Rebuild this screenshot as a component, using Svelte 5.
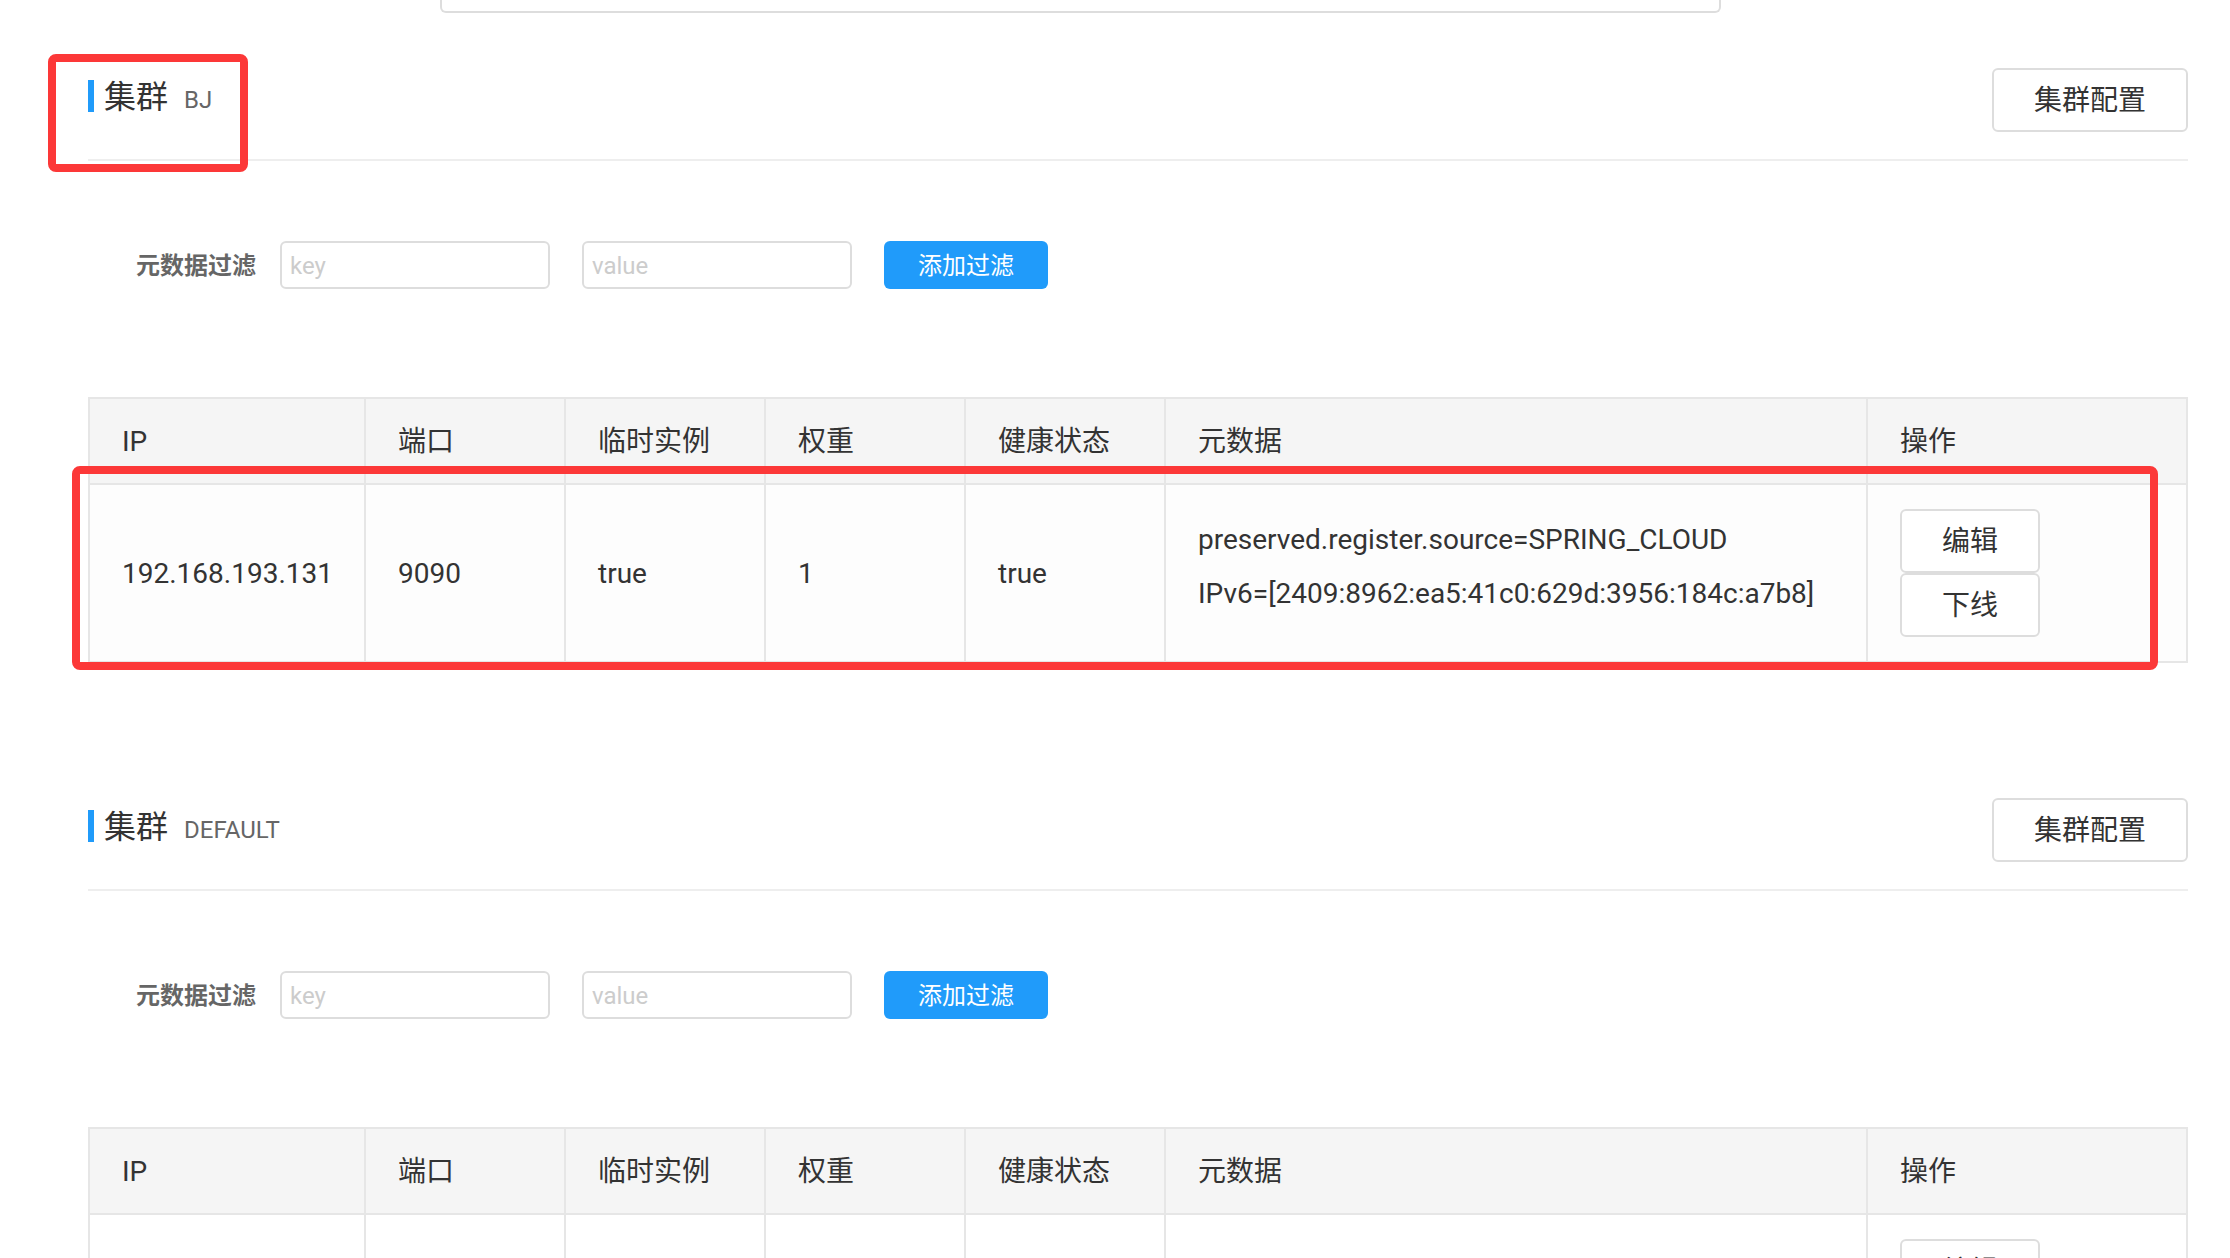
<script>
  const columns = [
    { title: 'IP', cls: 'ip' },
    { title: '端口', cls: 'short' },
    { title: '临时实例', cls: 'short' },
    { title: '权重', cls: 'short' },
    { title: '健康状态', cls: 'short' },
    { title: '元数据', cls: 'metadata' },
    { title: '操作', cls: 'operation' },
  ]

  let clusters = [
    {
      name: 'BJ',
      marked: true,
      instances: [
        {
          ip: '192.168.193.131',
          port: 9090,
          ephemeral: true,
          weight: 1,
          healthy: true,
          metadata: {
            'preserved.register.source': 'SPRING_CLOUD',
            IPv6: '[2409:8962:ea5:41c0:629d:3956:184c:a7b8]',
          },
        },
      ],
    },
    {
      name: 'DEFAULT',
      marked: false,
      instances: [
        { ip: '', port: '', ephemeral: '', weight: '', healthy: '', metadata: {} },
      ],
    },
  ]
</script>

<main class="page">
  <div class="service-form">
    <input class="service-field" type="text" aria-label="服务元数据" readonly />
  </div>

  {#each clusters as cluster}
    <section class="cluster">
      <header class="cluster-head">
        <h2>集群<span>{cluster.name}</span></h2>
        <button class="btn wide" type="button">集群配置</button>
        {#if cluster.marked}
          <div class="mark mark-title"></div>
        {/if}
      </header>

      <form class="filter" on:submit|preventDefault>
        <label for="key-{cluster.name}">元数据过滤</label>
        <input id="key-{cluster.name}" type="text" placeholder="key" />
        <input type="text" placeholder="value" aria-label="value" />
        <button class="btn-primary" type="submit">添加过滤</button>
      </form>

      <div class="table-wrap">
        <table>
          <thead>
            <tr>
              {#each columns as column}
                <th class={column.cls}>{column.title}</th>
              {/each}
            </tr>
          </thead>
          <tbody>
            {#each cluster.instances as instance}
              <tr class:active={cluster.marked}>
                <td>{instance.ip}</td>
                <td>{instance.port}</td>
                <td>{instance.ephemeral}</td>
                <td>{instance.weight}</td>
                <td>{instance.healthy}</td>
                <td>
                  {#each Object.entries(instance.metadata) as [key, value]}
                    <p>{key}={value}</p>
                  {/each}
                </td>
                <td class="operation">
                  <div class="actions">
                    <button class="btn" type="button">编辑</button>
                    <button class="btn" type="button">下线</button>
                  </div>
                </td>
              </tr>
            {/each}
          </tbody>
        </table>
        {#if cluster.marked}
          <div class="mark mark-row"></div>
        {/if}
      </div>
    </section>
  {/each}
</main>

<style>
  :global(body) {
    background: #fff;
  }

  .page {
    box-sizing: border-box;
    height: 100vh;
    overflow: hidden;
    padding: 0 42px 0 88px;
    color: #333;
    font-family: Roboto, 'Noto Sans CJK SC', sans-serif;
    font-size: 28px;
    line-height: 40px;
  }

  input,
  button {
    box-sizing: border-box;
    margin: 0;
    font-family: inherit;
  }

  .service-form {
    display: grid;
    grid-template-columns: 352px 1281fr 467fr;
    margin-bottom: 55px;
  }

  .service-field {
    grid-column: 2;
    width: 100%;
    height: 13px;
    padding: 0;
    border: 2px solid #ddd;
    border-top: 0;
    border-radius: 0 0 6px 6px;
  }

  .cluster {
    margin-bottom: 135px;
  }

  .cluster-head {
    position: relative;
    display: flex;
    align-items: flex-start;
    justify-content: space-between;
    padding-bottom: 27px;
    border-bottom: 2px solid #eee;
  }

  h2 {
    box-sizing: border-box;
    display: flex;
    align-items: baseline;
    gap: 16px;
    height: 32px;
    margin: 12px 0;
    padding: 1px 0 0 10px;
    border-left: 6px solid #209bfa;
    font-size: 32px;
    font-weight: 400;
    line-height: 32px;
  }

  h2 span {
    color: #666;
    font-size: 24px;
  }

  .btn {
    width: 140px;
    height: 64px;
    padding: 2px 0 0;
    border: 2px solid #ddd;
    border-radius: 6px;
    background: #fff;
    color: #333;
    font-size: 28px;
    line-height: 40px;
    cursor: pointer;
  }

  .btn.wide {
    width: 196px;
  }

  .filter {
    display: flex;
    align-items: center;
    margin: 80px 0 108px;
    padding-left: 48px;
    font-size: 24px;
  }

  .filter label {
    margin-right: 24px;
    padding-top: 2px;
    color: #666;
    font-weight: 700;
  }

  .filter input {
    width: 270px;
    height: 48px;
    margin-right: 32px;
    padding: 2px 8px 0;
    border: 2px solid #ddd;
    border-radius: 6px;
    background: #fff;
    color: #333;
    font-size: 24px;
  }

  .filter input::placeholder {
    color: #ccc;
  }

  .btn-primary {
    width: 164px;
    height: 48px;
    padding: 2px 0 0;
    border: 0;
    border-radius: 6px;
    background: #209bfa;
    color: #fff;
    font-size: 24px;
    line-height: 40px;
    cursor: pointer;
  }

  .table-wrap {
    position: relative;
  }

  table {
    box-sizing: border-box;
    width: 100%;
    border: 2px solid #e6e6e6;
    border-width: 2px 0 0 2px;
    border-spacing: 0;
    table-layout: fixed;
  }

  th,
  td {
    box-sizing: border-box;
    padding: 2px 32px 0;
    border: 2px solid #e6e6e6;
    border-width: 0 2px 2px 0;
    font-weight: 400;
    text-align: left;
  }

  th {
    height: 86px;
    background: #f5f5f5;
  }

  td.operation {
    padding: 24px 32px;
  }

  .ip {
    width: 276px;
  }

  .short {
    width: 200px;
  }

  .operation {
    width: 320px;
  }

  tr.active td {
    background: #fdfdfd;
  }

  td p {
    margin: 0 0 14px;
  }

  .actions {
    display: flex;
    flex-direction: column;
    align-items: flex-start;
  }

  .mark {
    position: absolute;
    border: 8px solid #fc3838;
    border-radius: 8px;
    pointer-events: none;
  }

  .mark-title {
    top: -14px;
    left: -40px;
    box-sizing: border-box;
    width: 200px;
    height: 118px;
  }

  .mark-row {
    top: 69px;
    right: 30px;
    bottom: -7px;
    left: -16px;
  }
</style>
